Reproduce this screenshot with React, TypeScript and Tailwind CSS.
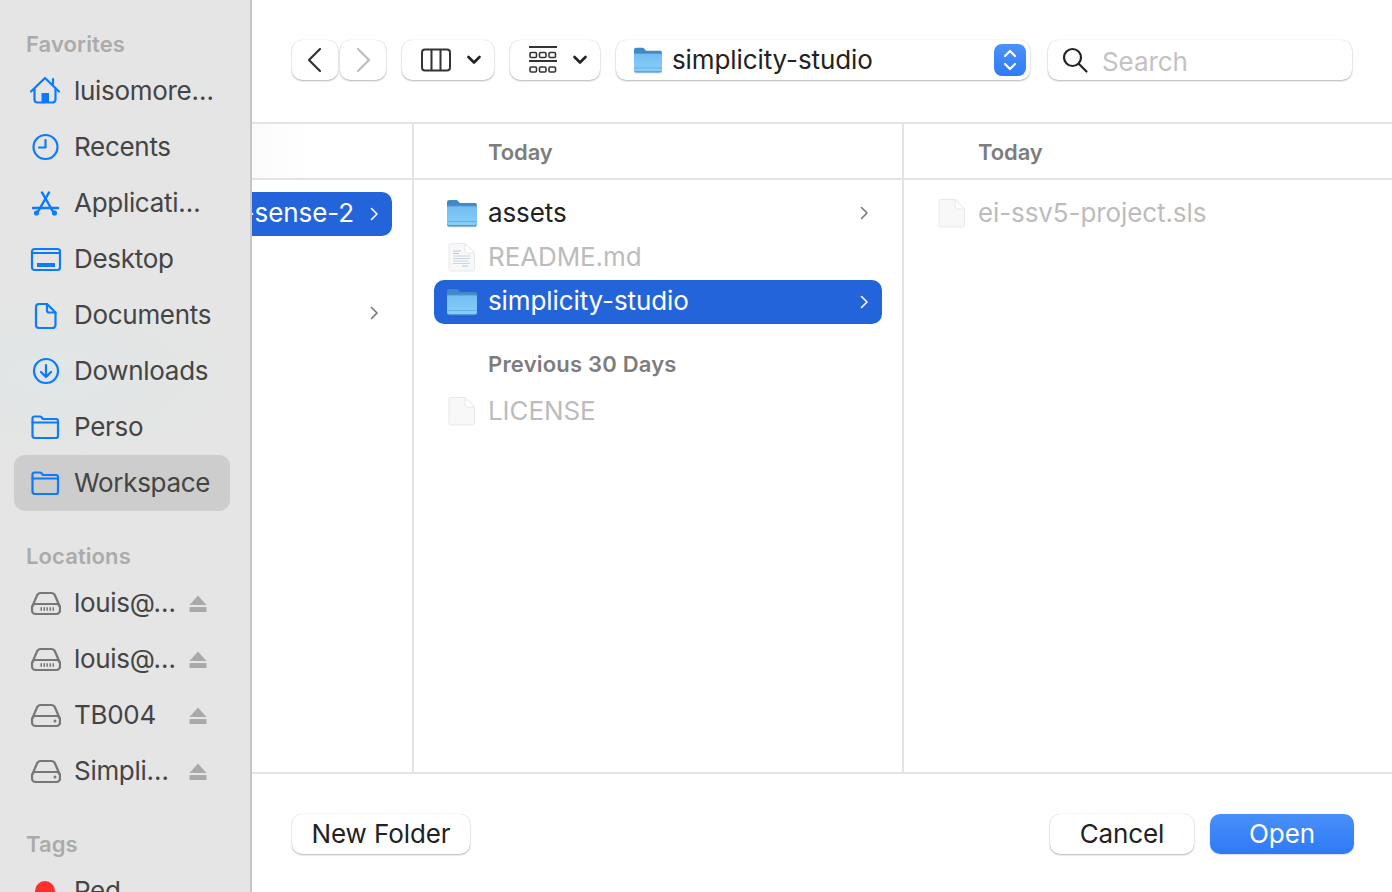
import React from "react";

const B = "#0a7aff";
const G = "#777777";

function S({ children, w = 32, h = 32, color = B, sw = 2.2, className = "" }: { children: React.ReactNode; w?: number; h?: number; color?: string; sw?: number; className?: string }) {
  return (
    <svg width={w} height={h} viewBox={`0 0 ${w} ${h}`} fill="none" stroke={color} strokeWidth={sw} strokeLinecap="round" strokeLinejoin="round" className={`shrink-0 ${className}`}>
      {children}
    </svg>
  );
}

const Home = () => (
  <S>
    <path d="M2 16.500 16 3l14 13.500" />
    <path d="M24 9V4" />
    <path d="M5.500 14v10.500a3 3 0 0 0 3 3h15a3 3 0 0 0 3-3V14" />
    <rect x="12.500" y="18" width="7.500" height="9.500" fill={B} stroke="none" />
  </S>
);
const Clock = () => (
  <S>
    <circle cx="16.500" cy="16" r="12" />
    <path d="M16.500 9v7.500H10" />
  </S>
);
const Apps = () => (
  <S sw={2.5}>
    <path d="M13 5.500 24.500 25.500" />
    <path d="M20 5.500 8.500 25.500" />
    <path d="M4 21h25" />
    <circle cx="7.500" cy="26" r="1.300" fill={B} />
    <circle cx="25.500" cy="26" r="1.300" fill={B} />
  </S>
);
const Desktop = () => (
  <S>
    <rect x="3" y="6" width="28" height="21" rx="2.500" />
    <path d="M3 10h28" />
    <rect x="8" y="20" width="18" height="4" fill={B} stroke="none" />
  </S>
);
const Doc = () => (
  <S>
    <path d="M10 5h8l8.500 8.500V26a3 3 0 0 1-3 3h-13.500a3 3 0 0 1-3-3V8a3 3 0 0 1 3-3Z" />
    <path d="M18 5v6.500a2 2 0 0 0 2 2h6.500" />
  </S>
);
const Dl = () => (
  <S>
    <circle cx="17" cy="16" r="12" />
    <path d="M17 10v11.500M12 17l5 5 5-5" />
  </S>
);
const FolderLine = () => (
  <S>
    <path d="M3.500 24.500V7.500a2 2 0 0 1 2-2H11a2 2 0 0 1 1.500.7L14 8h13a2 2 0 0 1 2 2v15a2 2 0 0 1-2 2H6a2.500 2.500 0 0 1-2.500-2.500Z" />
    <path d="M3.500 11.500H29" />
  </S>
);
const Drive = ({ net }: { net?: boolean }) => (
  <S color={G}>
    <rect x="3" y="17" width="28" height="10" rx="3.500" />
    <path d="M3.500 19 8 8.500A4 4 0 0 1 11.500 6h11A4 4 0 0 1 26 8.500L30.500 19" />
    {net ? (
      <path d="M11.500 22h15" strokeWidth="3.500" strokeDasharray="1.500 1.500" strokeLinecap="butt" />
    ) : (
      <circle cx="26" cy="22" r="1.500" fill={G} stroke="none" />
    )}
  </S>
);
const Eject = () => (
  <svg width="18" height="17" viewBox="0 0 18 17" className="shrink-0">
    <path d="M9 0.500 17.500 10H0.500Z" fill="#a9a9a9" />
    <rect x="0.500" y="12" width="17" height="5" rx="1" fill="#a9a9a9" />
  </svg>
);

function Folder({ id, w = 32, h = 30, selected }: { id: string; w?: number; h?: number; selected?: boolean }) {
  return (
    <svg width={w} height={h} viewBox="0 0 32 30" className="shrink-0">
      <defs>
        <linearGradient id={id} x1="0" y1="0" x2="0" y2="1">
          <stop offset="0" stopColor="#74bdf1" />
          <stop offset="1" stopColor="#86cefa" />
        </linearGradient>
      </defs>
      <path d="M1.500 28.500h29" stroke={selected ? "#1d4fb0" : "#d2d2d2"} strokeWidth="1.500" />
      <path d="M1 4.500A2.500 2.500 0 0 1 3.500 2H10c1 0 1.500.4 2.200 1.200L14 5h15a2 2 0 0 1 2 2v4H1Z" fill="#4088c6" />
      <path d="M1 7.500h30v18.500a2.500 2.500 0 0 1-2.500 2.500h-25A2.500 2.500 0 0 1 1 26Z" fill="#5398d2" />
      <path d="M1 8.500h30v16.500a2 2 0 0 1-2 2H3a2 2 0 0 1-2-2Z" fill={`url(#${id})`} />
      <path d="M1 23.500h30" stroke="#68b1e6" strokeWidth="1" />
    </svg>
  );
}

function FileIcon({ lines }: { lines?: boolean }) {
  return (
    <svg width="28" height="30" viewBox="0 0 28 30" className="shrink-0">
      <path d="M2.500 1.500H17L26.500 11v16a2 2 0 0 1-2 2h-22a1.500 1.500 0 0 1-1.500-1.500V3a1.500 1.500 0 0 1 1.500-1.500Z" fill="#f8f8f8" stroke="#e8e8e8" />
      <path d="M17 1.500V9a2 2 0 0 0 2 2h7.500Z" fill="#ffffff" stroke="#e8e8e8" />
      {lines && (
        <g strokeWidth="1">
          <path d="M5 9h8" stroke="#a8c8e8" />
          <path d="M5 11.500h6" stroke="#e8b0b8" />
          <path d="M5 14h17M5 16.500h17M5 19h15" stroke="#c8d4e0" />
          <path d="M5 21.500h17" stroke="#c8d4e0" />
          <path d="M14 24h6" stroke="#a8c8e8" />
        </g>
      )}
    </svg>
  );
}

function Chev({ color }: { color: string }) {
  return (
    <svg width="10" height="16" viewBox="0 0 10 16" fill="none" stroke={color} strokeWidth="1.600" strokeLinecap="round" strokeLinejoin="round" className="shrink-0">
      <path d="M2.500 2.500 8 8l-5.500 5.500" />
    </svg>
  );
}

const Down = () => (
  <svg width="14" height="10" viewBox="0 0 14 10" fill="none" stroke="#222222" strokeWidth="2.600" strokeLinecap="round" strokeLinejoin="round" className="shrink-0">
    <path d="M1.500 2 7 7.500 12.500 2" />
  </svg>
);

const Label = ({ children, className = "" }: { children: React.ReactNode; className?: string }) => (
  <div className={`h-[32px] flex items-center pl-[26px] text-[22px] font-semibold tracking-[0.1px] text-[#ababab] ${className}`}>{children}</div>
);

function Item({ icon, text, selected, eject }: { icon: React.ReactNode; text: string; selected?: boolean; eject?: boolean }) {
  return (
    <div className={`ml-[14px] mr-[20px] h-[56px] flex items-center pl-[15px] rounded-[11px] ${selected ? "bg-[#cdcdcd]" : ""}`}>
      <div className="w-[32px] h-[32px] flex items-center justify-center shrink-0">{icon}</div>
      <span className="ml-[13px] text-[#444444] whitespace-nowrap flex-1 tracking-[-0.3px]">{text}</span>
      {eject && <div className="mr-[23px]"><Eject /></div>}
    </div>
  );
}

const btn = "bg-white rounded-[10px] shadow-[0_1px_2px_rgba(0,0,0,0.28),0_0_1px_rgba(0,0,0,0.2)]";

const Header = ({ children }: { children?: React.ReactNode }) => (
  <div className="h-[56px] border-b-2 border-[#e3e3e3] flex items-center pl-[74px] pt-[2px] text-[22px] font-semibold text-[#7d7d7d]">{children}</div>
);

function Row({ icon, text, selected, dim, chevron }: { icon: React.ReactNode; text: string; selected?: boolean; dim?: boolean; chevron?: boolean }) {
  return (
    <div className={`h-[44px] flex items-center pl-[12px] pr-[13px] rounded-[10px] ${selected ? "bg-[#2464da] text-white" : dim ? "text-[#bcbcbc]" : "text-[#222222]"}`}>
      <div className="w-[32px] flex justify-center shrink-0">{icon}</div>
      <span className={`ml-[10px] flex-1 whitespace-nowrap ${selected ? "pb-[2px]" : ""}`}>{text}</span>
      {chevron && <Chev color={selected ? "#ffffff" : "#777777"} />}
    </div>
  );
}

export default function App() {
  return (
    <div className="w-[1392px] h-[892px] overflow-hidden flex bg-white text-[26px] leading-none tracking-[-0.1px] font-['Inter','Liberation_Sans',sans-serif]">
      {/* Sidebar */}
      <aside className="w-[252px] h-full shrink-0 overflow-hidden pt-[28px] border-r-2 border-[#c6c6c6] bg-[#e5e5e5] bg-[radial-gradient(ellipse_170px_80px_at_60px_375px,#e0e6e6,#e5e5e5)]">
        <Label className="mb-[3px]">Favorites</Label>
        <Item icon={<Home />} text="luisomore…" />
        <Item icon={<Clock />} text="Recents" />
        <Item icon={<Apps />} text="Applicati…" />
        <Item icon={<Desktop />} text="Desktop" />
        <Item icon={<Doc />} text="Documents" />
        <Item icon={<Dl />} text="Downloads" />
        <Item icon={<FolderLine />} text="Perso" />
        <Item icon={<FolderLine />} text="Workspace" selected />
        <Label className="mt-[29px] mb-[3px]">Locations</Label>
        <Item icon={<Drive net />} text="louis@…" eject />
        <Item icon={<Drive net />} text="louis@…" eject />
        <Item icon={<Drive />} text="TB004" eject />
        <Item icon={<Drive />} text="Simpli…" eject />
        <Label className="mt-[29px] mb-[3px]">Tags</Label>
        <Item icon={<div className="w-[20px] h-[20px] rounded-full bg-[#fc3029]" />} text="Red" />
      </aside>

      {/* Main */}
      <main className="flex-1 min-w-0 h-full flex flex-col">
        {/* Toolbar */}
        <div className="h-[124px] shrink-0 border-b-2 border-[#e3e3e3] pt-[40px] pl-[40px] flex items-start">
          <div className={`${btn} w-[46px] h-[40px] flex items-center justify-center pr-[3px]`}>
            <svg width="16" height="26" viewBox="0 0 16 26" fill="none" stroke="#333333" strokeWidth="2.200" strokeLinecap="round" strokeLinejoin="round"><path d="M14 2 3 13l11 11" /></svg>
          </div>
          <div className={`${btn} ml-[2px] w-[46px] h-[40px] flex items-center justify-center pl-[2px]`}>
            <svg width="16" height="26" viewBox="0 0 16 26" fill="none" stroke="#bdbdbd" strokeWidth="2.200" strokeLinecap="round" strokeLinejoin="round"><path d="m2 2 11 11L2 24" /></svg>
          </div>
          <div className={`${btn} ml-[16px] w-[92px] h-[40px] flex items-center pl-[18px]`}>
            <svg width="32" height="24" viewBox="0 0 32 24" fill="none" stroke="#333333" strokeWidth="2"><rect x="2" y="1.500" width="28" height="21" rx="3" /><path d="M11.500 1.500v21M20.500 1.500v21" /></svg>
            <div className="ml-[15px]"><Down /></div>
          </div>
          <div className={`${btn} ml-[16px] w-[90px] h-[40px] flex items-center pl-[18px]`}>
            <svg width="30" height="28" viewBox="0 0 30 28" fill="none" stroke="#333333" strokeWidth="1.600">
              <path d="M1 1h28M1 15h28" strokeWidth="1.800" />
              <rect x="2" y="6.500" width="6.500" height="5" rx="1.300" />
              <rect x="11.500" y="6.500" width="6.500" height="5" rx="1.300" />
              <rect x="21" y="6.500" width="6.500" height="5" rx="1.300" />
              <rect x="2" y="21" width="6.500" height="5" rx="1.300" />
              <rect x="11.500" y="21" width="6.500" height="5" rx="1.300" />
              <rect x="21" y="21" width="6.500" height="5" rx="1.300" />
            </svg>
            <div className="ml-[15px]"><Down /></div>
          </div>
          <div className={`${btn} ml-[16px] w-[414px] h-[40px] flex items-center pl-[17px] pr-[4px]`}>
            <Folder id="pathf" w={30} h={28} />
            <span className="ml-[9px] flex-1 text-[#222222] pb-[1px]">simplicity-studio</span>
            <div className="w-[32px] h-[32px] rounded-[8px] bg-linear-to-b from-[#4b91f9] to-[#2f7bf5] flex items-center justify-center">
              <svg width="16" height="26" viewBox="0 0 16 26" fill="none" stroke="#ffffff" strokeWidth="2.200" strokeLinecap="round" strokeLinejoin="round"><path d="m3 9 5-5 5 5M3 17l5 5 5-5" /></svg>
            </div>
          </div>
          <div className={`${btn} ml-[18px] w-[304px] h-[40px] flex items-center pl-[13px]`}>
            <svg width="28" height="28" viewBox="0 0 28 28" fill="none" stroke="#222222" strokeWidth="2.200" strokeLinecap="round" className="shrink-0"><circle cx="11.500" cy="11.500" r="8.500" /><path d="m18 18 7.500 7.500" /></svg>
            <span className="ml-[13px] text-[#c2c2c2] pt-[3px]">Search</span>
          </div>
        </div>

        {/* Columns */}
        <div className="flex-1 min-h-0 flex">
          <div className="w-[162px] shrink-0 border-r-2 border-[#e3e3e3]">
            <div className="h-[56px] border-b-2 border-[#e3e3e3] bg-linear-to-r from-[#fbfbfb] to-white to-[38%]" />
            <div className="mt-[12px] w-[140px] h-[44px] bg-[#2464da] rounded-r-[10px] text-white flex items-center pr-[13px]">
              <div className="flex-1 min-w-0 overflow-hidden flex justify-end whitespace-nowrap pb-[2px]"><span>-sense-2</span></div>
              <div className="ml-[15px]"><Chev color="#ffffff" /></div>
            </div>
            <div className="mt-[55px] w-[140px] h-[44px] flex items-center justify-end pr-[13px]"><Chev color="#777777" /></div>
          </div>
          <div className="w-[490px] shrink-0 border-r-2 border-[#e3e3e3]">
            <Header>Today</Header>
            <div className="px-[20px] pt-[11px]">
              <Row icon={<Folder id="a" />} text="assets" chevron />
              <Row icon={<FileIcon lines />} text="README.md" dim />
              <div className="mt-[1px]"><Row icon={<Folder id="b" selected />} text="simplicity-studio" selected chevron /></div>
              <div className="mt-[20px] h-[40px] pl-[54px] flex items-center text-[22px] font-semibold tracking-[0.2px] text-[#7d7d7d]">Previous 30 Days</div>
              <div className="mt-[5px]"><Row icon={<FileIcon />} text="LICENSE" dim /></div>
            </div>
          </div>
          <div className="flex-1 min-w-0">
            <Header>Today</Header>
            <div className="px-[20px] pt-[11px]">
              <Row icon={<FileIcon />} text="ei-ssv5-project.sls" dim />
            </div>
          </div>
        </div>

        {/* Footer */}
        <div className="h-[120px] shrink-0 border-t-2 border-[#e3e3e3] pt-[40px] pl-[40px] pr-[38px] flex items-start text-[#222222]">
          <div className={`${btn} w-[178px] h-[40px] flex items-center justify-center pb-[1px]`}>New Folder</div>
          <div className="flex-1" />
          <div className={`${btn} w-[144px] h-[40px] flex items-center justify-center pb-[1px]`}>Cancel</div>
          <div className="ml-[16px] w-[144px] h-[40px] rounded-[10px] bg-linear-to-b from-[#4890f9] to-[#2f79f5] text-white flex items-center justify-center pb-[1px] shadow-[0_1px_2px_rgba(0,0,0,0.15)]">Open</div>
        </div>
      </main>
    </div>
  );
}
